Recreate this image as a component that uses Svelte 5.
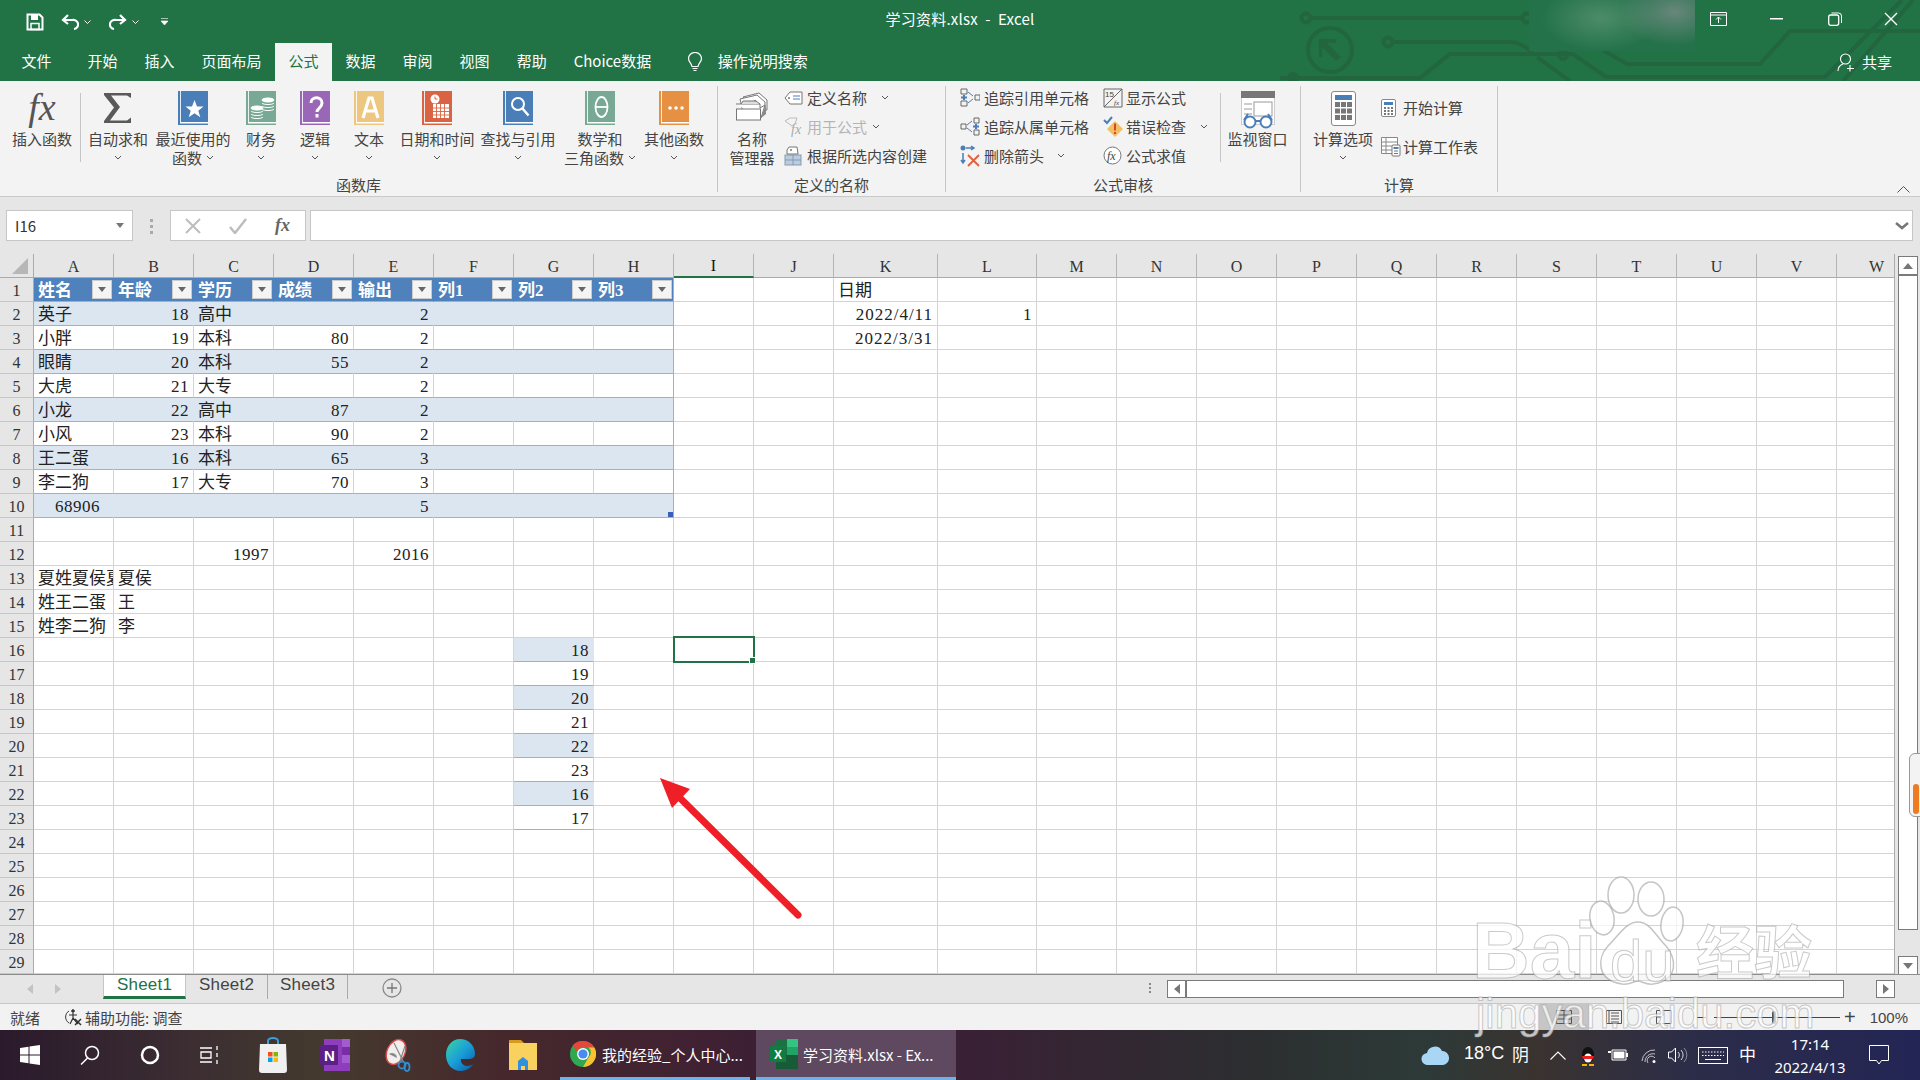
<script>
  const tabs = ['文件','开始','插入','页面布局','公式','数据','审阅','视图','帮助','Choice数据'];
  const colNames = 'ABCDEFGHIJKLMNOPQRSTUVW'.split('');
  const rows = Array.from({ length: 29 }, (_, i) => i + 1);
  const data = {
    A1:'姓名',B1:'年龄',C1:'学历',D1:'成绩',E1:'输出',F1:'列1',G1:'列2',H1:'列3',K1:'日期',
    A2:'英子',B2:18,C2:'高中',E2:2,K2:'2022/4/11',L2:1,
    A3:'小胖',B3:19,C3:'本科',D3:80,E3:2,K3:'2022/3/31',
    A4:'眼睛',B4:20,C4:'本科',D4:55,E4:2,
    A5:'大虎',B5:21,C5:'大专',E5:2,
    A6:'小龙',B6:22,C6:'高中',D6:87,E6:2,
    A7:'小风',B7:23,C7:'本科',D7:90,E7:2,
    A8:'王二蛋',B8:16,C8:'本科',D8:65,E8:3,
    A9:'李二狗',B9:17,C9:'大专',D9:70,E9:3,
    A10:68906,E10:5,C12:1997,E12:2016,
    A13:'夏姓夏侯夏',B13:'夏侯',A14:'姓王二蛋',B14:'王',A15:'姓李二狗',B15:'李',
    G16:18,G17:19,G18:20,G19:21,G20:22,G21:23,G22:16,G23:17
  };
  const tableCols = 'ABCDEFGH';
  function cellClass(c, r) {
    const v = data[c + r];
    const out = [];
    if (typeof v === 'number') out.push('num');
    if (c === 'K' && r > 1 && v) out.push('num', 'date');
    if (tableCols.includes(c) && r <= 10) {
      if (r === 1) out.push('thead');
      else out.push('tb', r % 2 === 0 ? 'band' : 'plain');
    }
    if (c === 'H' && r <= 10) out.push('edge');
    if (c === 'A' && r === 10) out.push('total');
    if (c === 'G' && r >= 16 && r <= 23) out.push('tb', r % 2 === 0 ? 'band' : 'plain');
    return out.join(' ');
  }
  const books = [
    { k:'star', c:'#4a7eb8', w:76, l:['最近使用的','函数'], inline:true },
    { k:'coin', c:'#77a995', w:60, l:['财务'] },
    { k:'q', c:'#9a66b8', w:48, l:['逻辑'] },
    { k:'a', c:'#edc67f', w:60, l:['文本'] },
    { k:'date', c:'#d96343', w:76, l:['日期和时间'] },
    { k:'find', c:'#4a7eb8', w:86, l:['查找与引用'] },
    { k:'theta', c:'#77a995', w:78, l:['数学和','三角函数'], inline:true },
    { k:'more', c:'#e69044', w:70, l:['其他函数'] }
  ];
</script>

{#snippet chev()}
  <svg class="chev" width="8" height="5" viewBox="0 0 8 5"><path d="M1 1l3 3 3-3" fill="none" stroke="#555" stroke-width="1"/></svg>
{/snippet}

<div class="app">
  <header class="head">
    <svg class="circuit" width="1920" height="81" viewBox="0 0 1920 81" fill="none" stroke="#23653f" stroke-width="4">
      <circle cx="1306" cy="18" r="4.5"/><path d="M1311 18H1523"/><circle cx="1527" cy="18" r="4.5"/>
      <circle cx="1330" cy="50" r="22"/><path d="M1319 39h17v4l-9 0 14 14-5 4-14-14v10h-3z" fill="#23653f" stroke="none"/>
      <circle cx="1388" cy="42" r="4.5"/><path d="M1393 42H1510Q1520 42 1532 52"/>
      <circle cx="1293" cy="78" r="4"/><path d="M1280 78H1420L1450 54H1573L1606 77H1825L1902 0"/>
      <circle cx="1563" cy="55" r="4"/><path d="M1537 57L1570 81"/>
      <path d="M1603 50L1627 64H1760L1790 31H1920M1843 81L1913 0"/>
    </svg>
    <div class="blur"></div>

    <div class="titlebar">
      <div class="qat">
        <svg class="q-save" width="18" height="18" viewBox="0 0 18 18"><path d="M1.500 1.500h12l3 3v12h-15z" fill="none" stroke="#fff" stroke-width="2"/><rect x="5" y="2" width="7" height="5" fill="#fff"/><rect x="5" y="10.500" width="8" height="6" fill="none" stroke="#fff" stroke-width="1.500"/></svg>
        <svg class="q-undo" width="18" height="16" viewBox="0 0 18 16"><path d="M7 1L2 6l5 4M2.500 6H11a5 4.500 0 0 1 2 9" fill="none" stroke="#fff" stroke-width="2.200"/></svg>
        <svg class="q-c1" width="7" height="4" viewBox="0 0 7 4"><path d="M.5.5l3 3 3-3" fill="none" stroke="#fff"/></svg>
        <svg class="q-redo" width="18" height="16" viewBox="0 0 18 16"><path d="M11 1l5 5-5 4M15.500 6H7a5 4.500 0 0 0-2 9" fill="none" stroke="#fff" stroke-width="2.200"/></svg>
        <svg class="q-c2" width="7" height="4" viewBox="0 0 7 4"><path d="M.5.5l3 3 3-3" fill="none" stroke="#fff"/></svg>
        <svg class="q-more" width="7" height="7" viewBox="0 0 7 7"><path d="M0 .5h7M0 3h7l-3.500 4z" fill="#fff" stroke="#fff" stroke-width=".6"/></svg>
      </div>
      <div class="title">学习资料.xlsx  -  Excel</div>
      <div class="winbtns">
        <svg class="w-opt" width="17" height="14" viewBox="0 0 17 14"><path d="M.5.500h16v13H.5zM.5 3h16M8.500 11V5M6 7.500l2.500-2.500L11 7.500" fill="none" stroke="#fff"/></svg>
        <svg class="w-min" width="13" height="2" viewBox="0 0 13 2"><rect width="13" height="1.500" fill="#fff"/></svg>
        <svg class="w-res" width="14" height="14" viewBox="0 0 14 14"><rect x=".7" y="3" width="10" height="10.300" rx="2" fill="none" stroke="#fff" stroke-width="1.300"/><path d="M3.500 1h7a3 3 0 0 1 3 3v7" fill="none" stroke="#fff"/></svg>
        <svg class="w-close" width="14" height="14" viewBox="0 0 14 14"><path d="M1 1l12 12M13 1L1 13" stroke="#fff" stroke-width="1.400"/></svg>
      </div>
    </div>

    <nav class="tabs">
      {#each tabs as t}
        <span class="tab" class:active={t === '公式'} class:first={t === '文件'}>{t}</span>
      {/each}
      <svg class="bulb" width="16" height="20" viewBox="0 0 16 20"><path d="M5 14.500C4.500 11 1.500 10 1.500 6.500a6.500 6 0 0 1 13 0C14.500 10 11.500 11 11 14.500zM5.500 16.500h5M6.500 18.500h3" fill="none" stroke="#fff" stroke-width="1.200"/></svg>
      <span class="search">操作说明搜索</span>
      <span class="share">
        <svg width="20" height="19" viewBox="0 0 20 19"><circle cx="8.500" cy="6" r="5" fill="none" stroke="#fff" stroke-width="1.100"/><path d="M1 18c0-4 2-6 5-7M13 12v6.500M10 15.500h7" fill="none" stroke="#fff" stroke-width="1.100"/></svg>
        共享
      </span>
    </nav>
  </header>

  <section class="ribbon">
    <div class="group g1">
      <div class="body">
        <div class="lg" style="width:76px">
          <div class="ic"><span class="fx">fx</span></div>
          <div class="ln">插入函数</div>
        </div>
        <div class="sep"></div>
        <div class="lg" style="width:74px">
          <div class="ic">
            <svg width="30" height="34" viewBox="0 0 30 34"><path d="M1 2h27v5L24 4.500H8L17 16 7 29.500h17l4-3v5.500H1v-2L11 16.500 1 4z" fill="#5a5a5a"/></svg>
          </div>
          <div class="ln">自动求和</div>
          <div class="ln">{@render chev()}</div>
        </div>
        {#each books as b}
          <div class="lg" style="width:{b.w}px">
            <div class="ic">
              <svg width="30" height="34" viewBox="0 0 30 34">
                <rect width="30" height="34" fill={b.c}/>
                <rect x="2" y="0" width="1" height="31" fill="#fff" opacity=".85"/>
                <rect x="2" y="31" width="28" height="1.500" fill="#fff"/>
                {#if b.k === 'star'}
                  <path d="M16.500 9l2.500 6.500h6.500l-5.200 4.200 2 6.500-5.800-4-5.800 4 2-6.500-5.200-4.200H14z" fill="#fff"/>
                {:else if b.k === 'coin'}
                  <g fill={b.c} stroke="#fff" stroke-width="1"><ellipse cx="22" cy="9" rx="6" ry="2" fill="#fff"/><path d="M16 12c1 2 11 2 12 0M16 15c1 2 11 2 12 0M16 18c1 2 11 2 12 0" fill="none"/><ellipse cx="11" cy="17" rx="6" ry="2" fill="#fff"/><path d="M5 20c1 2 11 2 12 0M5 23c1 2 11 2 12 0M5 26c1 2 11 2 12 0" fill="none"/></g>
                {:else if b.k === 'q'}
                  <path d="M11 12c0-7 11-7 11 0 0 5-5 5-5 9" fill="none" stroke="#fff" stroke-width="3"/><rect x="15.500" y="23" width="3" height="3.500" fill="#fff"/>
                {:else if b.k === 'a'}
                  <path d="M9 27l6-20h3l6 20M11.500 20h10" fill="none" stroke="#fff" stroke-width="3.200"/>
                {:else if b.k === 'date'}
                  <circle cx="13" cy="8" r="4.500" fill="#fff"/><path d="M13 5.500V8h2.500" fill="none" stroke={b.c}/><rect x="11" y="13" width="16" height="14" fill="#fff"/><path d="M11 17h16M11 20.500h16M11 24h16M14.500 13v14M18.500 13v14M22.500 13v14" stroke={b.c} stroke-width=".9"/>
                {:else if b.k === 'find'}
                  <circle cx="15" cy="13" r="6" fill="none" stroke="#fff" stroke-width="2"/><path d="M19.500 17.500l6 7" stroke="#fff" stroke-width="2.500"/>
                {:else if b.k === 'theta'}
                  <ellipse cx="16.500" cy="16" rx="6" ry="10" fill="none" stroke="#fff" stroke-width="1.800"/><path d="M11 16h11" stroke="#fff" stroke-width="1.800"/>
                {:else}
                  <circle cx="11" cy="17" r="1.800" fill="#fff"/><circle cx="17" cy="17" r="1.800" fill="#fff"/><circle cx="23" cy="17" r="1.800" fill="#fff"/>
                {/if}
              </svg>
            </div>
            {#each b.l as line, i}
              <div class="ln">{line}{#if b.inline && i === 1}<span class="gapc">{@render chev()}</span>{/if}</div>
            {/each}
            {#if !b.inline}<div class="ln">{@render chev()}</div>{/if}
          </div>
        {/each}
      </div>
      <div class="glabel">函数库</div>
    </div>

    <div class="group g2">
      <div class="body">
        <div class="lg" style="width:52px">
          <div class="ic">
            <svg width="34" height="30" viewBox="0 0 34 30" fill="#fff" stroke="#777" stroke-width="1"><path d="M8 6l16-4 8 7v10l-8 0z"/><path d="M5 8l17-4 8 7v10H8z"/><circle cx="20" cy="11" r="1.500"/><path d="M1 13h24v4l5-3-4 13H25"/><path d="M6 13l2-3h13l4 3" fill="#ddd"/><rect x="1.500" y="18" width="24" height="11"/><path d="M26 27l5-13v9z" fill="#888" stroke="none"/></svg>
          </div>
          <div class="ln">名称</div>
          <div class="ln">管理器</div>
        </div>
        <div class="col c2">
          <div class="sm"><span class="si"><svg width="19" height="14" viewBox="0 0 19 14"><path d="M6 1h12v12H6L1 7z" fill="#fff" stroke="#777"/><circle cx="5" cy="7" r="1" fill="#777"/><path d="M9 5h7M9 8h7" stroke="#4a7eb8"/></svg></span>定义名称<span class="cm" style="margin-left:14px">{@render chev()}</span></div>
          <div class="sm off"><span class="si"><svg width="19" height="20" viewBox="0 0 19 20"><path d="M1 4l5-3h7l-2 6-3 2z" fill="none" stroke="#bbb"/><text x="7" y="17" font-family="Liberation Serif" font-style="italic" font-size="14" fill="#aaa">fx</text></svg></span>用于公式<span class="cm" style="margin-left:5px">{@render chev()}</span></div>
          <div class="sm"><span class="si"><svg width="18" height="20" viewBox="0 0 18 20"><rect x="1" y="9" width="16" height="10" fill="#b8cce4" stroke="#8a9aae"/><path d="M1 14h16M9 9v10" stroke="#8a9aae"/><path d="M3 8V4l2-3h8l1 7z" fill="#fff" stroke="#777"/><circle cx="7" cy="4" r="1" fill="#777"/></svg></span>根据所选内容创建</div>
        </div>
      </div>
      <div class="glabel">定义的名称</div>
    </div>

    <div class="group g3">
      <div class="body">
        <div class="col c3a">
          <div class="sm"><span class="si"><svg width="20" height="19" viewBox="0 0 20 19" fill="none"><path d="M1 1h6v5H1zM1 13h6v5H1zM15 7h5v5h-5z" stroke="#666"/><path d="M1 9.500h6M4 7v5" stroke="#4a7eb8" stroke-width="2"/><path d="M8 4l5 4M8 15l5-4" stroke="#4a7eb8"/></svg></span>追踪引用单元格</div>
          <div class="sm"><span class="si"><svg width="20" height="19" viewBox="0 0 20 19" fill="none"><path d="M14 1h5v5h-5zM14 13h5v5h-5zM1 7h5v5H1z" stroke="#666"/><path d="M13 9.500h6M16 7v5" stroke="#4a7eb8" stroke-width="2"/><path d="M7 8l5-4M7 11l5 4" stroke="#4a7eb8"/></svg></span>追踪从属单元格</div>
          <div class="sm"><span class="si"><svg width="20" height="22" viewBox="0 0 20 22" fill="none"><circle cx="3" cy="3" r="2.500" fill="#4a7eb8"/><path d="M6 3h8M11 1l3 2-3 2M3 8v10M1 15l2 3 2-3" stroke="#4a7eb8" stroke-width="1.500"/><path d="M8 10l11 11M19 10L8 21" stroke="#e0603c" stroke-width="1.800"/></svg></span>删除箭头<span class="cm" style="margin-left:13px">{@render chev()}</span></div>
        </div>
        <div class="col c3b">
          <div class="sm"><span class="si"><svg width="20" height="20" viewBox="0 0 20 20" fill="none" stroke="#666"><path d="M1 1h18v18H1z"/><path d="M19 1L1 19" /><text x="2" y="9" font-size="8" font-family="Liberation Sans" fill="#444" stroke="none">15</text><text x="11" y="17" font-size="7" font-family="Liberation Serif" font-style="italic" fill="#444" stroke="none">fx</text></svg></span>显示公式</div>
          <div class="sm"><span class="si"><svg width="20" height="22" viewBox="0 0 20 22"><path d="M1 4l3 3 5-6" fill="none" stroke="#4a7eb8" stroke-width="2"/><path d="M12 5l8 8-8 8-8-8z" fill="#f2c063"/><rect x="11" y="7.500" width="2" height="7" fill="#d8442c"/><rect x="11" y="16" width="2" height="2" fill="#d8442c"/></svg></span>错误检查<span class="cm" style="margin-left:14px">{@render chev()}</span></div>
          <div class="sm"><span class="si"><svg width="19" height="19" viewBox="0 0 19 19"><circle cx="9.500" cy="9.500" r="8.500" fill="#fff" stroke="#777"/><text x="4" y="14" font-family="Liberation Serif" font-style="italic" font-size="12" fill="#444">fx</text></svg></span>公式求值</div>
        </div>
        <div class="sep"></div>
        <div class="lg" style="width:73px">
          <div class="ic">
            <svg width="34" height="38" viewBox="0 0 34 38"><rect x=".5" y=".5" width="33" height="33" fill="#fff" stroke="#ccc"/><rect width="34" height="7" fill="#777"/><path d="M3 13h8M3 18h8M3 23h8" stroke="#999"/><rect x="13" y="11" width="18" height="14" fill="none" stroke="#999"/><circle cx="9" cy="31" r="5.500" fill="#fff" stroke="#4a7eb8" stroke-width="2"/><circle cx="25" cy="31" r="5.500" fill="#fff" stroke="#4a7eb8" stroke-width="2"/><path d="M14 30h6M3 29l4-6M31 29l-4-6" stroke="#4a7eb8" stroke-width="2"/></svg>
          </div>
          <div class="ln">监视窗口</div>
        </div>
      </div>
      <div class="glabel">公式审核</div>
    </div>

    <div class="group g4">
      <div class="body">
        <div class="lg" style="width:66px">
          <div class="ic">
            <svg width="25" height="35" viewBox="0 0 25 35"><rect x=".5" y=".5" width="24" height="34" rx="2.500" fill="#fff" stroke="#888"/><rect x="4" y="4" width="17" height="5" fill="#4a7eb8"/><g fill="#777"><rect x="4" y="11" width="5" height="5"/><rect x="10" y="11" width="5" height="5"/><rect x="16" y="11" width="5" height="5"/><rect x="4" y="17.500" width="5" height="5"/><rect x="10" y="17.500" width="5" height="5"/><rect x="16" y="17.500" width="5" height="5"/><rect x="4" y="24" width="5" height="5"/><rect x="10" y="24" width="5" height="5"/><rect x="16" y="24" width="5" height="5"/></g></svg>
          </div>
          <div class="ln">计算选项</div>
          <div class="ln">{@render chev()}</div>
        </div>
        <div class="col c4">
          <div class="sm"><span class="si"><svg width="15" height="18" viewBox="0 0 15 18"><rect x=".5" y=".5" width="14" height="17" rx="1.500" fill="#fff" stroke="#888"/><rect x="3" y="3" width="9" height="3" fill="#4a7eb8"/><path d="M3 8h2v2H3zM6.500 8h2v2h-2zM10 8h2v2h-2zM3 11h2v2H3zM6.500 11h2v2h-2zM10 11h2v2h-2zM3 14h2v2H3zM6.500 14h2v2h-2zM10 14h2v2h-2z" fill="#777"/></svg></span>开始计算</div>
          <div class="sm"><span class="si"><svg width="20" height="20" viewBox="0 0 20 20"><path d="M.5.500h16v16H.5zM.5 5h16M.5 9h16M.5 13h16M5 .5v16" fill="#fff" stroke="#888"/><rect x="11" y="8" width="8" height="11" rx="1" fill="#fff" stroke="#777"/><rect x="12.500" y="10" width="5" height="2" fill="#4a7eb8"/><path d="M13 14h4M13 16.500h4" stroke="#777"/></svg></span>计算工作表</div>
        </div>
      </div>
      <div class="glabel">计算</div>
    </div>
    <svg class="collapse" width="13" height="7" viewBox="0 0 13 7"><path d="M.5 6.500l6-6 6 6" fill="none" stroke="#555"/></svg>
  </section>

  <section class="fbar">
    <div class="namebox">I16<svg width="8" height="5" viewBox="0 0 8 5"><path d="M0 0h8L4 5z" fill="#777"/></svg></div>
    <div class="dots"><i></i><i></i><i></i></div>
    <div class="fxbox">
      <svg width="16" height="16" viewBox="0 0 16 16"><path d="M1 1l14 14M15 1L1 15" stroke="#bdbdbd" stroke-width="2"/></svg>
      <svg width="18" height="16" viewBox="0 0 18 16"><path d="M1 9l5 6L17 1" fill="none" stroke="#bdbdbd" stroke-width="2.500"/></svg>
      <span>fx</span>
    </div>
    <div class="finput"><svg width="14" height="8" viewBox="0 0 14 8"><path d="M1 1l6 5 6-5" fill="none" stroke="#777" stroke-width="2.500"/></svg></div>
  </section>

  <section class="sheet">
    <div class="gridwrap">
      <div class="grid">
        <div class="corner"><span></span></div>
        {#each colNames as c}
          <div class="ch" class:cur={c === 'I'}>{c}</div>
        {/each}
        {#each rows as r}
          <div class="rh">{r}</div>
          {#each colNames as c}
            <div class="cell {cellClass(c, r)}">
              <span>{data[c + r] ?? ''}</span>
              {#if r === 1 && tableCols.includes(c)}
                <b class="filter"></b>
              {/if}
              {#if c === 'H' && r === 10}<i class="handle"></i>{/if}
              {#if c === 'I' && r === 16}<i class="sel"><u></u></i>{/if}
            </div>
          {/each}
        {/each}
      </div>
    </div>
    <div class="vscroll">
      <div class="sb"><svg width="10" height="6" viewBox="0 0 10 6"><path d="M0 6h10L5 0z" fill="#777"/></svg></div>
      <div class="thumb"></div>
      <div class="sb"><svg width="10" height="6" viewBox="0 0 10 6"><path d="M0 0h10L5 6z" fill="#777"/></svg></div>
    </div>
    <div class="pill"><span></span></div>
  </section>

  <section class="tabbar">
    <div class="navs">
      <svg width="6" height="10" viewBox="0 0 6 10"><path d="M6 0v10L0 5z" fill="#c3c3c3"/></svg>
      <svg width="6" height="10" viewBox="0 0 6 10"><path d="M0 0v10l6-5z" fill="#c3c3c3"/></svg>
    </div>
    <div class="stab on">Sheet1</div>
    <div class="stab s2">Sheet2</div>
    <div class="stab s3">Sheet3</div>
    <svg class="plus" width="20" height="20" viewBox="0 0 20 20"><circle cx="10" cy="10" r="9" fill="none" stroke="#8a8a8a" stroke-width="1.300"/><path d="M10 5v10M5 10h10" stroke="#777" stroke-width="1.300"/></svg>
    <div class="tdots"><i></i><i></i><i></i></div>
    <div class="hscroll">
      <div class="hb"><svg width="6" height="10" viewBox="0 0 6 10"><path d="M6 0v10L0 5z" fill="#777"/></svg></div>
      <div class="hthumb"></div>
      <div class="hb"><svg width="6" height="10" viewBox="0 0 6 10"><path d="M0 0v10l6-5z" fill="#777"/></svg></div>
    </div>
  </section>

  <section class="status">
    <span class="ready">就绪</span>
    <span class="acc">
      <svg width="18" height="18" viewBox="0 0 18 18" fill="none" stroke="#333"><path d="M5 3a7 7 0 0 0 0 12" /><circle cx="9" cy="3" r="1.300" fill="#333"/><path d="M5 7h8M9 5v5l-3 6M9 10l5 6" stroke-width="1.200"/><path d="M11 11l6 6M17 11l-6 6" stroke-width="1.500"/></svg>
      辅助功能: 调查
    </span>
    <div class="views">
      <span class="v active"><svg width="16" height="14" viewBox="0 0 16 14"><path d="M.5.5h15v13H.5zM.5 5h15M.5 9h15M8 .5v13" fill="none" stroke="#555"/></svg></span>
      <span class="v"><svg width="16" height="14" viewBox="0 0 16 14"><path d="M.5.5h15v13H.5zM3 .5v13M5 3h8M5 6h8M5 9h8M5 12h8" fill="none" stroke="#555"/></svg></span>
      <span class="v"><svg width="16" height="14" viewBox="0 0 16 14"><path d="M4 .5H.5v13H4M6 .5h9.500v13H6M.5 7H6M7 1v5" fill="none" stroke="#555"/></svg></span>
    </div>
    <div class="zoom">
      <i class="minus"></i>
      <div class="track"><b></b></div>
      <span class="zplus">+</span>
      <span class="zval">100%</span>
    </div>
  </section>

  <footer class="taskbar">
    <div class="tb-left">
      <span class="tk"><svg width="20" height="20" viewBox="0 0 20 20" fill="#fff"><path d="M0 3l8.500-1.300V9.500H0zM9.500 1.500L20 0v9.500H9.500zM0 10.500h8.500v7.800L0 17zM9.500 10.500H20V20L9.500 18.500z"/></svg></span>
      <span class="tk"><svg width="20" height="20" viewBox="0 0 20 20" fill="none" stroke="#fff" stroke-width="1.500"><circle cx="12" cy="8" r="6.500"/><path d="M7.500 13L1 19.500"/></svg></span>
      <span class="tk"><svg width="20" height="20" viewBox="0 0 20 20"><circle cx="10" cy="10" r="8" fill="none" stroke="#fff" stroke-width="2.500"/></svg></span>
      <span class="tk"><svg width="20" height="20" viewBox="0 0 20 20" fill="none" stroke="#fff" stroke-width="1.300"><path d="M0 3h12M0 17h12M1 7h10v6H1zM17 1v4M17 8v4M17 15v4"/></svg></span>
      <span class="tk"><svg width="28" height="36" viewBox="0 0 28 36"><path d="M9 8V4a5 3 0 0 1 10 0v4" fill="none" stroke="#3aa0dc" stroke-width="2"/><path d="M1 7h26l1 26a3 3 0 0 1-3 3H3a3 3 0 0 1-3-3z" fill="#f0f0f0"/><rect x="9" y="15" width="4.500" height="4.500" fill="#f25022"/><rect x="14.500" y="15" width="4.500" height="4.500" fill="#7fba00"/><rect x="9" y="20.500" width="4.500" height="4.500" fill="#00a4ef"/><rect x="14.500" y="20.500" width="4.500" height="4.500" fill="#ffb900"/></svg></span>
      <span class="tk"><svg width="30" height="32" viewBox="0 0 30 32"><path d="M4 0h26v32H4z" fill="#8e3dbd"/><path d="M22 0h8v8h-8zM22 16h8v8h-8z" fill="#a35bd0"/><path d="M22 8h8v8h-8z" fill="#7a2ea6"/><rect y="6" width="18" height="20" rx="1" fill="#5b1f86"/><text x="4" y="22" font-family="Liberation Sans" font-weight="700" font-size="15" fill="#fff">N</text></svg></span>
      <span class="tk"><svg width="30" height="34" viewBox="0 0 30 34"><ellipse cx="13" cy="14" rx="9" ry="13" transform="rotate(25 13 14)" fill="#f2eeee" stroke="#d34a4a" stroke-width="1.500"/><path d="M6 16a5 5 0 0 1 8 4" fill="#888"/><path d="M11 5l9 18M22 8l-5 15" stroke="#888" stroke-width="1.200"/><circle cx="19" cy="27" r="3.500" fill="none" stroke="#2f8fd0" stroke-width="1.800"/><ellipse cx="24" cy="29" rx="2.500" ry="4" fill="none" stroke="#2f8fd0" stroke-width="1.800"/></svg></span>
      <span class="tk"><svg width="30" height="32" viewBox="0 0 30 32"><defs><linearGradient id="ed" x1="0" y1="0" x2="1" y2="1"><stop offset="0" stop-color="#3bd5a0"/><stop offset=".5" stop-color="#1a9fd8"/><stop offset="1" stop-color="#0c56a8"/></linearGradient></defs><path d="M1 16C1 7 7 0 15 0c8 0 15 6 15 15 0 4-3 5-7 5h-7c-1 3 2 7 6 7 3 0 5-1 6-2-2 4-7 7-12 7C7 32 1 25 1 16z" fill="url(#ed)"/></svg></span>
      <span class="tk"><svg width="28" height="30" viewBox="0 0 28 30"><path d="M0 0h12l3 3H0z" fill="#d69a1f"/><rect y="3" width="28" height="27" fill="#f8d15f"/><path d="M9 30V21l5-4 5 4v9h-3v-4h-4v4z" fill="#2f8fe0"/></svg></span>
      <span class="task chrome">
        <svg width="26" height="26" viewBox="0 0 26 26"><circle cx="13" cy="13" r="13" fill="#2fa84f"/><path d="M13 0a13 13 0 0 1 11.300 6.500H13a6.500 6.500 0 0 0-6 4L2.500 4.500A13 13 0 0 1 13 0z" fill="#e4483a"/><path d="M24.300 6.500A13 13 0 0 1 13 26l5.500-9.500a6.500 6.500 0 0 0 0-10z" fill="#fbc02d"/><circle cx="13" cy="13" r="6" fill="#fff"/><circle cx="13" cy="13" r="4.600" fill="#4a8af4"/></svg>
        <span>我的经验_个人中心...</span>
      </span>
      <span class="task excel">
        <svg width="28" height="30" viewBox="0 0 28 30"><rect x="6" y="0" width="22" height="30" rx="2" fill="#1d7044"/><rect x="17" y="0" width="11" height="8" fill="#33c481"/><rect x="17" y="8" width="11" height="8" fill="#21a366"/><rect x="6" y="16" width="22" height="14" fill="#185c37"/><rect x="0" y="7" width="16" height="16" rx="1" fill="#107c41"/><text x="4" y="20" font-family="Liberation Sans" font-weight="700" font-size="12" fill="#fff">X</text></svg>
        <span>学习资料.xlsx - Ex...</span>
      </span>
    </div>
    <div class="tray">
      <svg class="cloud" width="28" height="20" viewBox="0 0 28 20"><path d="M7 20a6 6 0 0 1-1-12 8 8 0 0 1 15-2 6.500 7 0 0 1 1 14z" fill="#a9d6f5"/></svg>
      <span class="temp">18°C</span>
      <span class="yin">阴</span>
      <svg class="up" width="16" height="9" viewBox="0 0 16 9"><path d="M.5 8.500L8 1l7.500 7.500" fill="none" stroke="#fff" stroke-width="1.100"/></svg>
      <svg class="qq" width="16" height="20" viewBox="0 0 16 20"><ellipse cx="8" cy="9" rx="6" ry="8" fill="#111"/><ellipse cx="8" cy="12" rx="4" ry="4.500" fill="#fff"/><path d="M2 10h12l-1 3H3z" fill="#e22"/><path d="M2 18h5v2H2zM9 18h5v2H9z" fill="#f5b400"/></svg>
      <svg class="batt" width="20" height="12" viewBox="0 0 20 12"><path d="M4 1h14v10H4z" fill="none" stroke="#fff"/><rect x="5.500" y="2.500" width="11" height="7" fill="#fff"/><rect x="18" y="4" width="2" height="4" fill="#fff"/><path d="M0 2h3v2H0z" fill="#fff"/></svg>
      <svg class="wifi" width="16" height="16" viewBox="0 0 16 16" fill="none" stroke="#fff" stroke-width="1"><path d="M1 13A12 12 0 0 1 14 2M4 14a8 8 0 0 1 10-8M7 15a4 4 0 0 1 7-5" opacity=".7"/><circle cx="13" cy="13.500" r="1.500" fill="#fff" stroke="none"/></svg>
      <svg class="spk" width="20" height="16" viewBox="0 0 20 16" fill="none" stroke="#fff"><path d="M.5 5h3l4-4v14l-4-4h-3z"/><path d="M10 5a4 4 0 0 1 0 6M13 3a7 7 0 0 1 0 10" opacity=".8"/><path d="M16 1a10 10 0 0 1 0 14" opacity=".45"/></svg>
      <svg class="kbd" width="30" height="17" viewBox="0 0 30 17" fill="none" stroke="#fff"><rect x=".5" y=".5" width="29" height="16"/><path d="M4 5h22M4 8.500h22" stroke-dasharray="1.500 1.500"/><path d="M7 12.500h16"/></svg>
      <span class="ime">中</span>
      <span class="clock"><span>17:14</span><span>2022/4/13</span></span>
      <svg class="note" width="20" height="20" viewBox="0 0 20 20" fill="none" stroke="#fff"><path d="M.5.500h19v15h-7L10 19l-2.500-3.500h-7z"/></svg>
    </div>
  </footer>

  <svg class="arrow" width="160" height="160" viewBox="0 0 160 160">
    <path d="M138 137L21 21" stroke="#ef1f27" stroke-width="7" stroke-linecap="round"/>
    <path d="M0 0L30 11L12 30z" fill="#ef1f27"/>
  </svg>

  <div class="wm">
    <span class="wm-bai">Bai</span>
    <svg class="wm-paw" width="100" height="112" viewBox="0 0 100 112" fill="rgba(255,255,255,.72)" stroke="rgba(150,150,150,.55)" stroke-width="1.500">
      <ellipse cx="33" cy="21" rx="13" ry="18"/><ellipse cx="63" cy="25" rx="13" ry="17"/><ellipse cx="14" cy="44" rx="12" ry="17" transform="rotate(-10 14 44)"/><ellipse cx="84" cy="50" rx="11" ry="17" transform="rotate(8 84 50)"/>
      <path d="M50 48c12 0 17 13 28 24 10 11 14 34-13 38-8 1-11-3-15-3s-8 4-16 3C8 106 9 84 20 72c11-11 18-24 30-24z"/>
    </svg>
    <span class="wm-du">du</span>
    <span class="wm-cn">经验</span>
    <span class="wm-url">jingyan.baidu.com</span>
  </div>
</div>

<style>
  :global(body) { margin: 0; background: #fff; }
  .app {
    position: relative; width: 1920px; height: 1080px; overflow: hidden;
    display: flex; flex-direction: column;
    font: 15px "Noto Sans CJK SC", "Liberation Sans", sans-serif; color: #444;
  }
  svg { display: block; flex: none; }

  /* header */
  .head { position: relative; height: 81px; flex: none; background: #217346; color: #fff; }
  .circuit { position: absolute; left: 0; top: 0; }
  .blur {
    position: absolute; left: 1529px; top: 0; width: 166px; height: 51px;
    background:
      radial-gradient(ellipse 55px 34px at 145px 12px, rgba(120,140,135,.8), transparent),
      radial-gradient(ellipse 60px 34px at 72px 18px, rgba(110,160,130,.55), transparent),
      #23724a;
  }
  .titlebar { position: relative; height: 43px; display: grid; grid-template-columns: 1fr auto 1fr; align-items: center; }
  .qat { display: flex; align-items: center; padding-left: 26px; }
  .q-undo { margin-left: 17px; }
  .q-c1 { margin-left: 5px; }
  .q-redo { margin-left: 18px; }
  .q-c2 { margin-left: 5px; }
  .q-more { margin-left: 22px; }
  .title { white-space: pre; font-size: 15px; margin-top: -7px; letter-spacing: .25px; }
  .winbtns { display: flex; justify-content: flex-end; align-items: center; margin-top: -5px; padding-right: 22px; }
  .w-min { margin-left: 43px; }
  .w-res { margin-left: 45px; }
  .w-close { margin-left: 42px; }

  .tabs { position: relative; height: 38px; display: flex; align-items: stretch; padding-left: 8px; line-height: 36px; }
  .tab { padding: 0 13.5px; white-space: nowrap; }
  .tab.first { margin-right: 9px; }
  .tab.active { background: #f3f3f3; color: #217346; }
  .bulb { margin: 9px 0 0 22px; }
  .search { margin-left: 15px; }
  .share { margin-left: auto; margin-right: 28px; display: flex; align-items: center; gap: 5px; }

  /* ribbon */
  .ribbon {
    position: relative; height: 116px; flex: none; box-sizing: border-box; background: #f3f3f3;
    border-bottom: 1px solid #c9c9c9; display: flex; padding-top: 5px; line-height: 19px;
  }
  .group { height: 106px; box-sizing: border-box; border-right: 1px solid #c6c6c6; display: flex; flex-direction: column; flex: none; }
  .g1 { width: 718px; }
  .g2 { width: 228px; }
  .g3 { width: 355px; }
  .g4 { width: 197px; }
  .body { height: 89px; display: flex; align-items: flex-start; flex: none; }
  .g1 .body { padding-left: 4px; }
  .g2 .body { padding-left: 8px; }
  .g3 .body { padding-left: 14px; }
  .g4 .body { padding-left: 9px; }
  .glabel { height: 17px; line-height: 20px; text-align: center; }
  .lg { flex: none; padding-top: 5px; text-align: center; box-sizing: border-box; white-space: nowrap; }
  .ic { height: 38px; display: flex; justify-content: center; }
  .ln { height: 19px; display: flex; justify-content: center; align-items: center; }
  .gapc { margin-left: 4px; }
  .fx { font: italic 38px/32px "Liberation Serif", serif; color: #555; }
  .sep { width: 1px; height: 69px; margin-top: 7px; background: #c6c6c6; flex: none; }
  .col { flex: none; margin-top: -3px; }
  .c2 { margin-left: 6px; }
  .c3a { width: 143px; }
  .c3b { width: 117px; }
  .c4 { margin-left: 5px; padding-top: 5px; }
  .c4 .sm { height: 39px; }
  .sm { height: 29px; display: flex; align-items: center; white-space: nowrap; }
  .si { width: 23px; flex: none; display: flex; align-items: center; }
  .c3a .si { width: 24px; }
  .c4 .si { width: 22px; }
  .off { color: #b5b5b5; }
  .collapse { position: absolute; left: 1897px; top: 105px; }

  /* formula bar */
  .fbar { height: 57px; flex: none; box-sizing: border-box; background: #e6e6e6; display: flex; align-items: flex-start; padding: 13px 7px 0 6px; }
  .namebox, .fxbox, .finput { height: 31px; box-sizing: border-box; background: #fff; border: 1px solid #c6c6c6; display: flex; align-items: center; }
  .namebox { width: 127px; padding: 0 8px; justify-content: space-between; font-size: 15px; color: #333; }
  .dots { width: 37px; display: flex; flex-direction: column; align-items: center; gap: 3px; padding-top: 9px; }
  .dots i { width: 3px; height: 3px; background: #aaa; }
  .fxbox { width: 136px; padding-left: 14px; box-sizing: border-box; gap: 28px; }
  .fxbox span { font: italic 700 18px "Liberation Serif", serif; color: #666; }
  .finput { flex: 1; margin-left: 4px; justify-content: flex-end; padding-right: 3px; }

  /* sheet */
  .sheet { position: relative; height: 720px; flex: none; display: flex; background: #e6e6e6; }
  .gridwrap { width: 1895px; overflow: hidden; background: #fff; border-right: 1px solid #ababab; box-sizing: border-box; }
  .grid {
    display: grid; grid-auto-rows: 24px; width: max-content;
    grid-template-columns: 34px repeat(10, 80px) 104px 99px repeat(11, 80px);
    font: 17px "Liberation Serif", "Noto Sans CJK SC", serif; color: #222;
  }
  .corner, .ch, .rh { background: #e6e6e6; box-sizing: border-box; display: flex; align-items: center; justify-content: center; color: #333; }
  .corner { border-bottom: 1px solid #ababab; border-right: 1px solid #ababab; }
  .corner span { width: 0; height: 0; border-style: solid; border-width: 0 0 16px 16px; border-color: transparent transparent #b7b7b7 transparent; margin-left: 6px; }
  .ch { border-right: 1px solid #b4b4b4; border-bottom: 1px solid #ababab; padding-top: 2px; font-size: 16px; }
  .ch.cur { color: #111; border-bottom: 2px solid #217346; }
  .rh { border-right: 1px solid #ababab; border-bottom: 1px solid #c6c6c6; padding-top: 2px; font-size: 16px; }
  .cell {
    position: relative; box-sizing: border-box; height: 24px; line-height: 25px; padding: 0 4px; white-space: nowrap; overflow: hidden;
    border-right: 1px solid #d4d4d4; border-bottom: 1px solid #d4d4d4;
  }
  .cell.num { text-align: right; letter-spacing: .5px; }
  .cell.date { letter-spacing: 1px; }
  .cell.total { padding-right: 13px; }
  .cell.thead { background: #4f81bd; color: #fff; font-weight: 700; border-right-color: #4f81bd; border-bottom-color: #95b3d7; overflow: visible; }
  .cell.tb { border-bottom-color: #95b3d7; }
  .cell.band { background: #dce6f1; border-right-color: #dce6f1; }
  .cell.edge { border-right-color: #95b3d7; }
  .cell.band.edge { border-right-color: #95b3d7; }
  .filter {
    position: absolute; right: 1px; top: 2px; width: 20px; height: 19px; box-sizing: border-box;
    background: #f4f4f4; border: 1px solid #ccc;
  }
  .filter::after {
    content: ''; position: absolute; left: 5px; top: 6px; width: 0; height: 0;
    border-style: solid; border-width: 5px 4px 0 4px; border-color: #666 transparent transparent transparent;
  }
  .handle { position: absolute; right: 0; bottom: 0; width: 5px; height: 5px; background: #3a5fb8; }
  .cell:has(.sel) { overflow: visible; z-index: 2; }
  .sel { position: absolute; left: -1px; top: -2px; width: 82px; height: 27px; box-sizing: border-box; border: 2px solid #217346; }
  .sel u { position: absolute; right: -3px; bottom: -3px; width: 5px; height: 5px; background: #217346; border: 1px solid #fff; box-sizing: content-box; }

  .vscroll { width: 25px; box-sizing: border-box; padding: 2px 2px 0 3px; display: flex; flex-direction: column; }
  .sb { height: 19px; flex: none; box-sizing: border-box; background: #fff; border: 1px solid #7a7a7a; display: flex; align-items: center; justify-content: center; }
  .thumb { height: 655px; flex: none; box-sizing: border-box; background: #fff; border: 1px solid #7a7a7a; margin-bottom: 26px; }
  .pill { position: absolute; left: 1909px; top: 499px; width: 12px; height: 64px; border-radius: 6px 0 0 6px; background: #f3f3f3; border: 1px solid #999; box-sizing: border-box; }
  .pill span { position: absolute; left: 3px; top: 30px; width: 6px; height: 30px; border-radius: 3px; background: #ee7b22; }

  /* tabs */
  .tabbar { height: 29px; flex: none; box-sizing: border-box; background: #e6e6e6; border-top: 1px solid #8c8c8c; display: flex; align-items: flex-start; font: 17px "Liberation Sans", sans-serif; position: relative; }
  .navs { width: 103px; display: flex; gap: 22px; padding: 9px 0 0 27px; box-sizing: border-box; }
  .stab { height: 24px; line-height: 20px; text-align: center; color: #444; box-sizing: border-box; letter-spacing: .2px; }
  .stab.on { width: 83px; background: #fff; color: #217346; border-bottom: 3px solid #217346; border-left: 1px solid #c6c6c6; border-right: 1px solid #c6c6c6; }
  .stab.s2 { width: 82px; border-right: 1px solid #aaa; }
  .stab.s3 { width: 80px; border-right: 1px solid #aaa; }
  .plus { margin: 3px 0 0 34px; }
  .tdots { position: absolute; left: 1149px; top: 8px; display: flex; flex-direction: column; gap: 2px; }
  .tdots i { width: 2px; height: 2px; background: #888; }
  .hscroll { position: absolute; left: 1167px; top: 5px; width: 728px; height: 18px; display: flex; }
  .hb { width: 19px; flex: none; box-sizing: border-box; background: #fff; border: 1px solid #7a7a7a; display: flex; align-items: center; justify-content: center; }
  .hthumb { width: 658px; flex: none; box-sizing: border-box; background: #fff; border: 1px solid #7a7a7a; margin-right: 32px; }

  /* status */
  .status { height: 27px; flex: none; box-sizing: border-box; background: #f2f2f2; border-top: 1px solid #c6c6c6; display: flex; align-items: center; font-size: 15px; color: #444; position: relative; }
  .ready { margin-left: 10px; }
  .acc { margin-left: 24px; display: flex; align-items: center; gap: 3px; }
  .views { margin-left: auto; display: flex; align-self: stretch; }
  .v { width: 50px; display: flex; align-items: center; justify-content: center; }
  .v.active { background: #c6c6c6; }
  .zoom { width: 231px; display: flex; align-items: center; padding-left: 8px; box-sizing: border-box; margin-right: 0; }
  .minus { width: 9px; height: 1px; background: #444; flex: none; }
  .track { position: relative; width: 126px; height: 1px; background: #444; margin-left: 8px; flex: none; }
  .track b { position: absolute; left: 58px; top: -6px; width: 4px; height: 13px; background: #555; border-radius: 2px; }
  .zplus { margin-left: 4px; font: 20px "Liberation Sans", sans-serif; }
  .zval { margin-left: 14px; font: 15px "Liberation Sans", sans-serif; }

  /* taskbar */
  .taskbar {
    height: 50px; flex: none; display: flex; align-items: stretch; color: #fff;
    background: linear-gradient(90deg, #2a1a2c 0, #3c2e32 10%, #443a2e 17%, #46282c 26%, #3d1f35 40%, #3a2035 50%, #2c2e30 65%, #2c3a38 74%, #3a3330 80%, #2c2d48 88%, #232555 100%);
  }
  .tb-left { display: flex; align-items: stretch; padding-left: 5px; }
  .tk { width: 50px; margin-right: 12.5px; display: flex; align-items: center; justify-content: center; }
  .tk:nth-child(-n+3) { margin-right: 10px; }
  .task { display: flex; align-items: center; box-sizing: border-box; font-size: 15px; white-space: nowrap; border-bottom: 3px solid #6fb0e8; }
  .task > span { padding-top: 2px; }
  .chrome { width: 190px; padding-left: 10px; gap: 6px; margin-right: 6px; }
  .excel { width: 200px; padding-left: 14px; gap: 5px; background: #5e4960; }
  .tray { margin-left: auto; display: flex; align-items: center; position: relative; width: 500px; height: 50px; }
  .tray > * { position: absolute; }
  .cloud { left: 1px; top: 15px; }
  .temp { left: 44px; top: 13px; font: 18px "Liberation Sans", sans-serif; }
  .yin { left: 92px; top: 11px; font-size: 17px; }
  .up { left: 130px; top: 21px; }
  .qq { left: 160px; top: 16px; }
  .batt { left: 188px; top: 19px; }
  .wifi { left: 221px; top: 18px; }
  .spk { left: 248px; top: 17px; }
  .kbd { left: 278px; top: 17px; }
  .ime { left: 319px; top: 11px; font-size: 17px; }
  .clock { left: 340px; width: 100px; top: 0; display: flex; flex-direction: column; align-items: center; font: 15px "Noto Sans", "Liberation Sans", sans-serif; line-height: 23px; padding-top: 3px; }
  .note { left: 449px; top: 15px; }

  /* overlays */
  .arrow { position: absolute; left: 660px; top: 778px; }
  .wm { position: absolute; left: 1440px; top: 860px; width: 480px; height: 200px; pointer-events: none; }
  .wm > * { position: absolute; }
  .wm-bai, .wm-du, .wm-cn, .wm-url {
    color: rgba(255,255,255,.72); -webkit-text-stroke: 1px rgba(150,150,150,.5); white-space: nowrap;
  }
  .wm-bai { left: 32px; top: 46px; font: 700 80px/90px "Liberation Sans", sans-serif; }
  .wm-paw { left: 148px; top: 14px; }
  .wm-du { left: 170px; top: 66px; font: 58px/70px "Liberation Sans", sans-serif; color: rgba(255,255,255,.6); }
  .wm-cn { left: 256px; top: 47px; font: 700 58px/84px "Noto Sans CJK SC", sans-serif; }
  .wm-url { left: 36px; top: 126px; font: 42px/56px "Liberation Sans", sans-serif; }
</style>
